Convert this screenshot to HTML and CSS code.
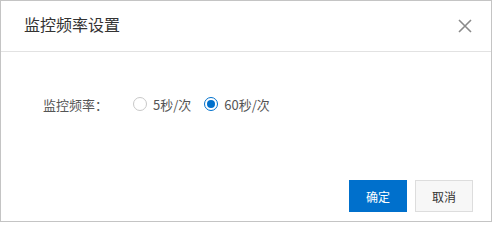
FILE: index.html
```html
<!DOCTYPE html>
<html lang="zh-CN">
<head>
<meta charset="utf-8">
<title>监控频率设置</title>
<link rel="stylesheet" href="styles.css">
</head>
<body>
<div class="dialog">
  <div class="dialog-header">
    <div class="dialog-title">监控频率设置</div>
    <svg class="close" width="14" height="14" viewBox="0 0 14 14">
      <path d="M1 1 L13 13 M13 1 L1 13" stroke="#8a8a8a" stroke-width="1.6" fill="none"/>
    </svg>
  </div>
  <div class="dialog-body">
    <div class="form-row">
      <span class="label">监控频率：</span>
      <label class="radio">
        <span class="radio-circle"></span>
        <span class="radio-text">5秒/次</span>
      </label>
      <label class="radio checked">
        <span class="radio-circle"></span>
        <span class="radio-text">60秒/次</span>
      </label>
    </div>
  </div>
  <div class="dialog-footer">
    <button class="btn btn-primary">确定</button>
    <button class="btn btn-default">取消</button>
  </div>
</div>
</body>
</html>
```
FILE: styles.css
```css
html, body {
  margin: 0;
  padding: 0;
  background: #ffffff;
}
body {
  font-family: "Noto Sans CJK SC", "Noto Sans", sans-serif;
  color: #333333;
}
.dialog {
  width: 492px;
  height: 222px;
  box-sizing: border-box;
  border: 1px solid #c4c4c4;
  display: flex;
  flex-direction: column;
  background: #fff;
}
.dialog-header {
  border-bottom: 1px solid #e2e2e2;
  display: flex;
  align-items: center;
  justify-content: space-between;
  padding: 0 19px 5px 23px;
  box-sizing: border-box;
  height: 51px;
}
.dialog-title {
  font-size: 16px;
  line-height: 20px;
  color: #333;
}
.close {
  display: block;
  margin-top: 4px;
}
.dialog-body {
  flex: 1;
  padding: 42px 0 0 42px;
}
.form-row {
  display: flex;
  align-items: center;
  height: 20px;
}
.label {
  font-size: 13px;
  color: #555;
  margin-right: 25px;
}
.radio {
  display: flex;
  align-items: center;
  margin-right: 13px;
}
.radio-circle {
  width: 14px;
  height: 14px;
  box-sizing: border-box;
  border: 1px solid #c8c8c8;
  border-radius: 50%;
  position: relative;
  margin-right: 6px;
}
.radio.checked .radio-circle {
  border-color: #0070cc;
}
.radio.checked .radio-circle::after {
  content: "";
  position: absolute;
  left: 2px;
  top: 2px;
  width: 8px;
  height: 8px;
  border-radius: 50%;
  background: #0070cc;
}
.radio-text {
  font-size: 13px;
  color: #555;
}
.dialog-footer {
  display: flex;
  justify-content: flex-end;
  gap: 8px;
  padding: 0 18px 9px 0;
}
.btn {
  width: 58px;
  height: 32px;
  font-family: "Noto Sans CJK SC", "Noto Sans", sans-serif;
  font-size: 12px;
  box-sizing: border-box;
  padding: 0;
  cursor: pointer;
}
.btn-primary {
  background: #0070cc;
  border: 1px solid #0070cc;
  color: #fff;
}
.btn-default {
  background: #f7f7f7;
  border: 1px solid #dddddd;
  color: #333;
}
```
